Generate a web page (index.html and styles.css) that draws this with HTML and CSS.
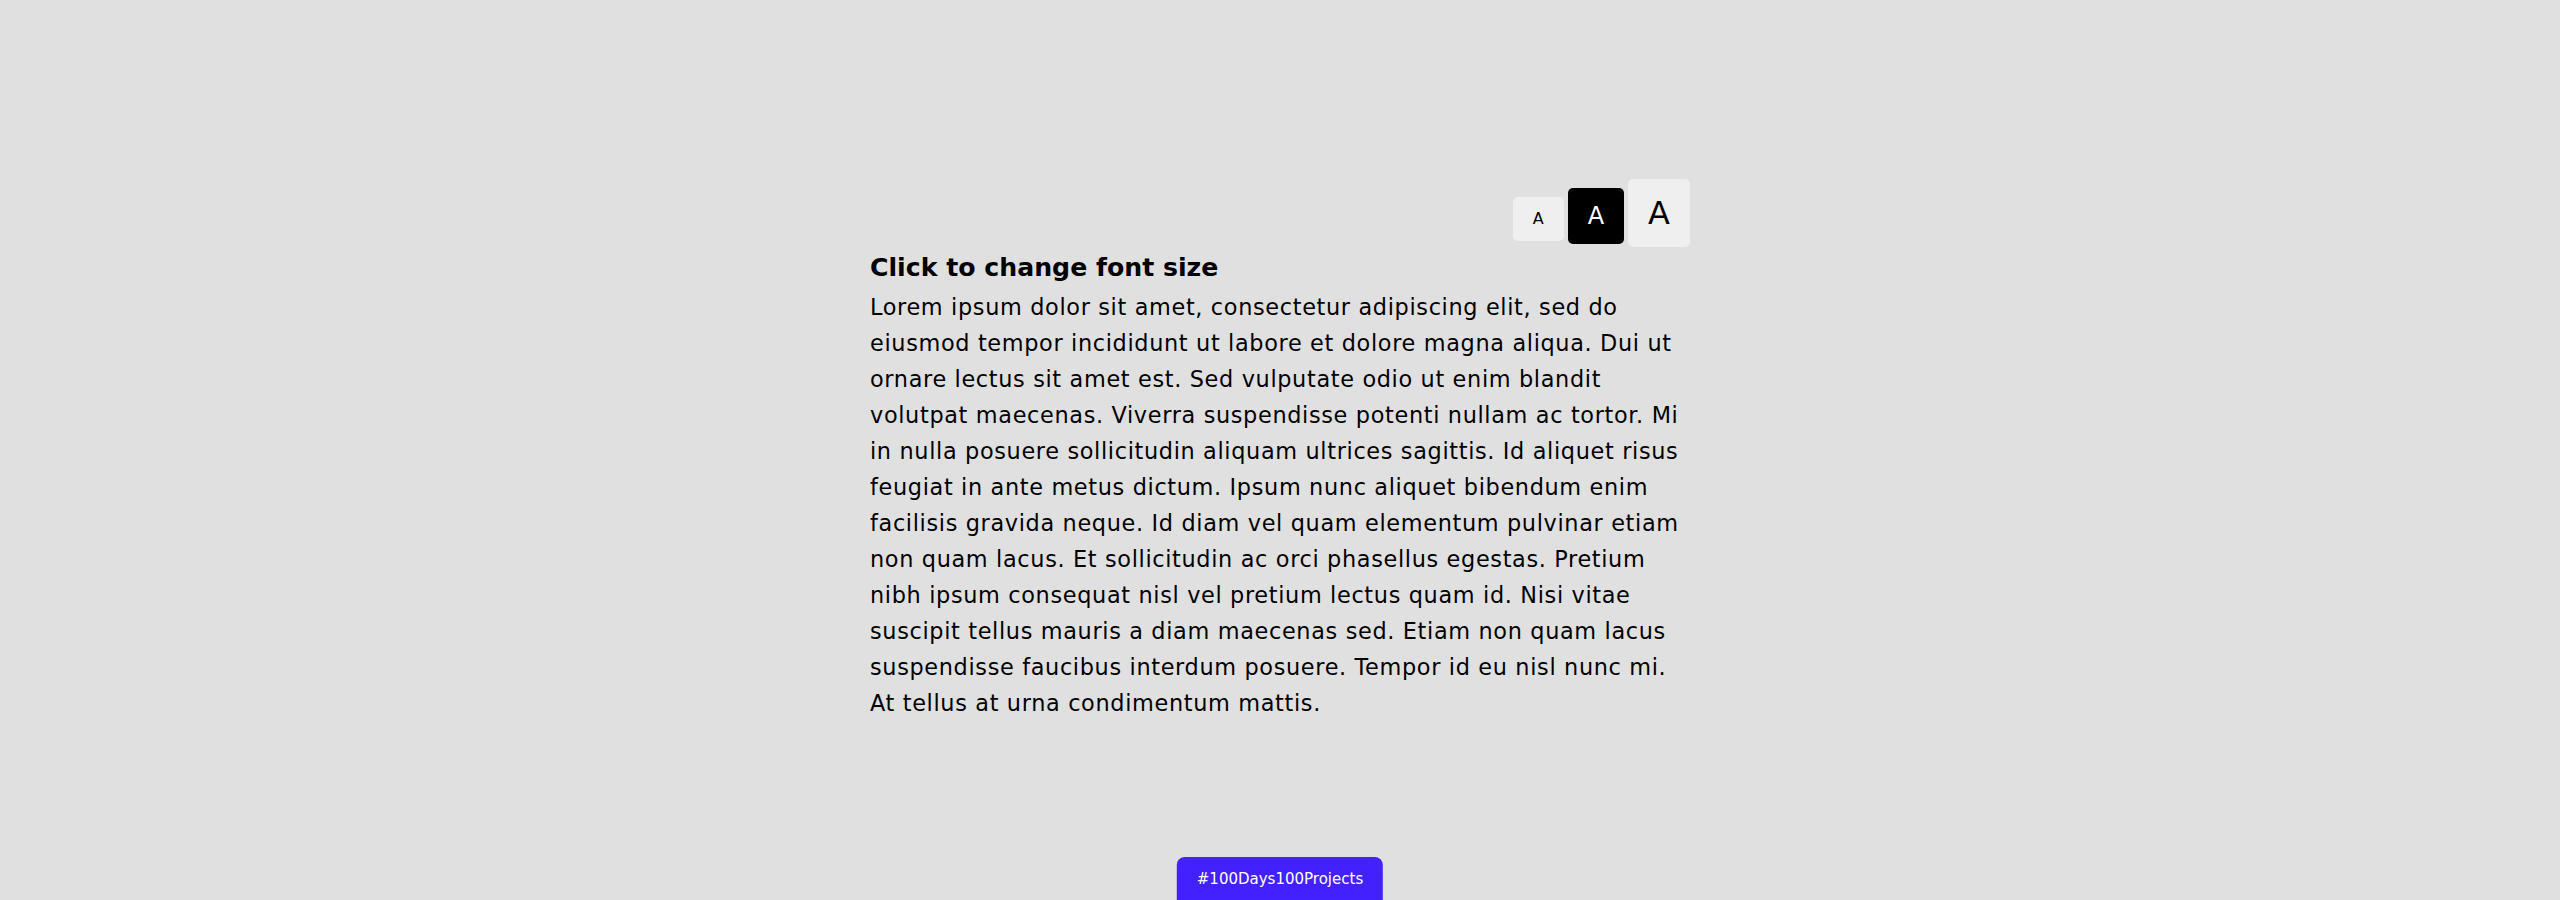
FILE: index.html
```html
<!DOCTYPE html>
<html lang="en">
<head>
<meta charset="utf-8">
<title>Font size changer</title>
<link rel="stylesheet" href="styles.css">
</head>
<body>
<main class="wrap">
  <div class="sizes">
    <button class="size-btn size-sm">A</button>
    <button class="size-btn size-md active">A</button>
    <button class="size-btn size-lg">A</button>
  </div>
  <h1 class="title">Click to change font size</h1>
  <p class="text">Lorem ipsum dolor sit amet, consectetur adipiscing elit, sed do eiusmod tempor incididunt ut labore et dolore magna aliqua. Dui ut ornare lectus sit amet est. Sed vulputate odio ut enim blandit volutpat maecenas. Viverra suspendisse potenti nullam ac tortor. Mi in nulla posuere sollicitudin aliquam ultrices sagittis. Id aliquet risus feugiat in ante metus dictum. Ipsum nunc aliquet bibendum enim facilisis gravida neque. Id diam vel quam elementum pulvinar etiam non quam lacus. Et sollicitudin ac orci phasellus egestas. Pretium nibh ipsum consequat nisl vel pretium lectus quam id. Nisi vitae suscipit tellus mauris a diam maecenas sed. Etiam non quam lacus suspendisse faucibus interdum posuere. Tempor id eu nisl nunc mi. At tellus at urna condimentum mattis.</p>
</main>
<a class="badge">#100Days100Projects</a>
</body>
</html>
```
FILE: styles.css
```css
html, body {
  margin: 0;
  padding: 0;
}

body {
  background: #e0e0e0;
  color: #000;
  font-family: "DejaVu Sans", "Liberation Sans", sans-serif;
  min-height: 100vh;
}

.wrap {
  width: 820px;
  margin: 0 auto;
  padding-top: 179px;
  display: flex;
  flex-direction: column;
}

.sizes {
  display: flex;
  justify-content: flex-end;
  align-items: baseline;
  gap: 4px;
  margin-bottom: 3px;
}

.size-btn {
  border: none;
  border-radius: 5px;
  background: #efefef;
  color: #000;
  font-family: "DejaVu Sans", sans-serif;
  padding: 0 20px;
  cursor: pointer;
}

.size-sm {
  font-size: 16px;
  line-height: 18px;
  padding-top: 13px;
  padding-bottom: 13px;
}

.size-md {
  font-size: 24px;
  line-height: 28px;
  padding-top: 14px;
  padding-bottom: 14px;
}

.size-lg {
  font-size: 32px;
  line-height: 38px;
  padding-top: 15px;
  padding-bottom: 15px;
}

.size-btn.active {
  background: #000;
  color: #fff;
}

.title {
  margin: 0 0 3px;
  font-size: 25.2px;
  font-weight: 700;
  line-height: 36px;
  color: #000;
}

.text {
  margin: 0;
  font-size: 22.4px;
  letter-spacing: 0.65px;
  line-height: 36px;
  color: #000;
}

.badge {
  position: fixed;
  left: 50%;
  bottom: 0;
  transform: translateX(-50%);
  background: #4321ff;
  color: #fff;
  font-size: 15px;
  line-height: 17.5px;
  padding: 14px 20px 12px;
  border-radius: 8px 8px 0 0;
  white-space: nowrap;
}
```
